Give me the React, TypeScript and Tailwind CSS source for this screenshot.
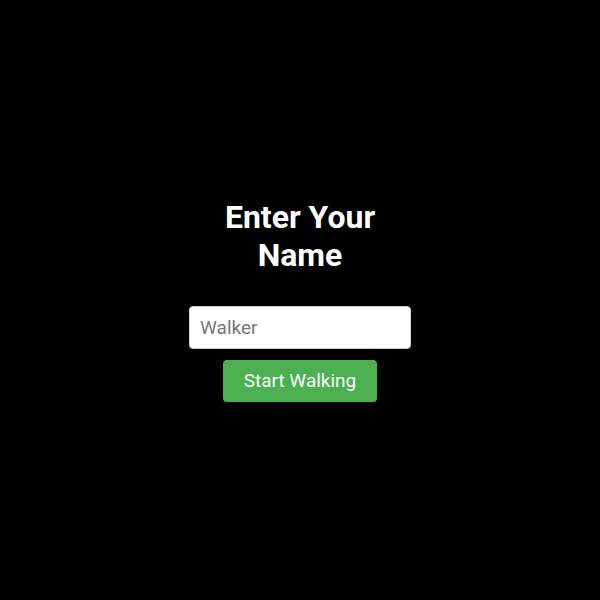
import React, { useState } from 'react';

const App = () => {
  const [name, setName] = useState('');

  return (
    <div className="min-h-screen w-full bg-black flex items-center justify-center" style={{ fontFamily: 'Roboto, "Liberation Sans", sans-serif' }}>
      <div className="w-[222px] flex flex-col items-center">
        <h1 className="text-white text-[32px] leading-[38px] font-bold text-center">Enter Your Name</h1>
        <input
          value={name}
          onChange={(e) => setName(e.target.value)}
          placeholder="Walker"
          className="mt-[32px] w-[222px] h-[43px] bg-white rounded-[4px] border border-[#ccc] px-[10px] text-[19px] text-[#333] placeholder:text-[#777] outline-none"
        />
        <button className="mt-[11px] h-[42px] px-[21px] bg-[#4caf50] rounded-[4px] text-white text-[19px]">
          Start Walking
        </button>
      </div>
    </div>
  );
};

export default App;
